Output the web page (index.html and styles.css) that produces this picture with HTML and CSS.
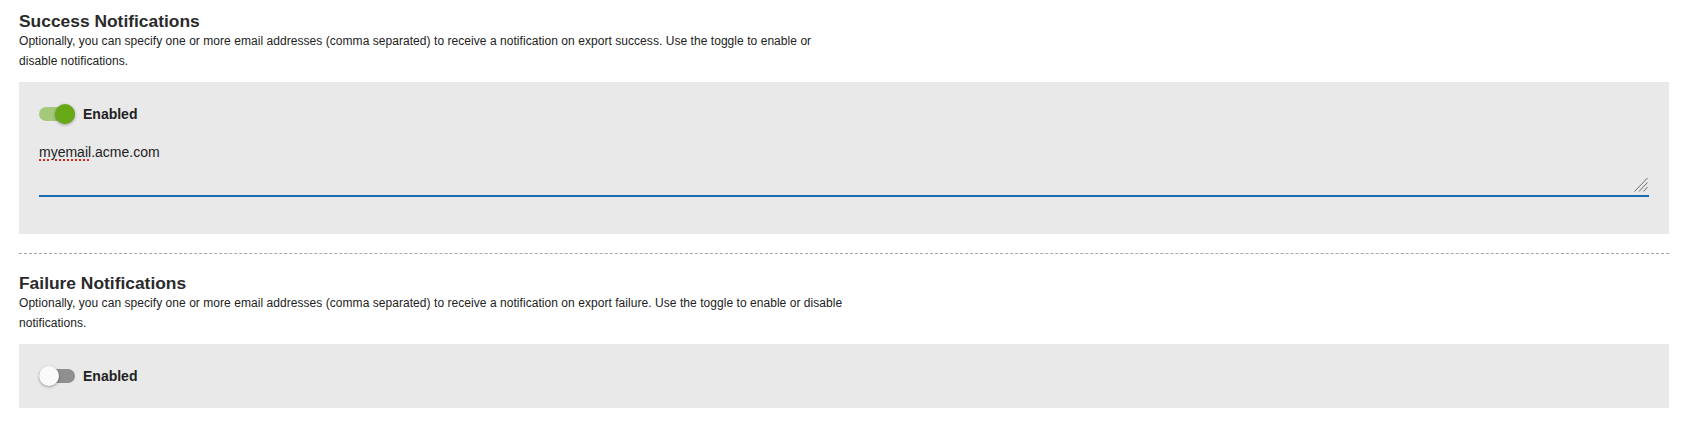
FILE: index.html
```html
<!DOCTYPE html>
<html lang="en">
<head>
<meta charset="utf-8">
<title>Notifications</title>
<link rel="stylesheet" href="styles.css">
</head>
<body>
<div class="page">
  <section class="section">
    <h2 class="section-title">Success Notifications</h2>
    <p class="section-desc">Optionally, you can specify one or more email addresses (comma separated) to receive a notification on export success. Use the toggle to enable or disable notifications.</p>
    <div class="panel">
      <div class="toggle-row">
        <span class="switch switch-on"><span class="track"></span><span class="thumb"></span></span>
        <span class="toggle-label">Enabled</span>
      </div>
      <div class="textarea" role="textbox" aria-multiline="true">
        <span class="misspell">myemail</span>.acme.com
        <svg class="resize" width="14" height="15" viewBox="0 0 14 15" aria-hidden="true">
          <line x1="0.5" y1="14.5" x2="13.5" y2="1" />
          <line x1="5" y1="14.5" x2="13.5" y2="5.5" />
          <line x1="9.5" y1="14.5" x2="13.5" y2="10" />
        </svg>
      </div>
    </div>
  </section>
  <hr class="separator">
  <section class="section">
    <h2 class="section-title">Failure Notifications</h2>
    <p class="section-desc">Optionally, you can specify one or more email addresses (comma separated) to receive a notification on export failure. Use the toggle to enable or disable notifications.</p>
    <div class="panel">
      <div class="toggle-row">
        <span class="switch switch-off"><span class="track"></span><span class="thumb"></span></span>
        <span class="toggle-label">Enabled</span>
      </div>
    </div>
  </section>
</div>
</body>
</html>
```
FILE: styles.css
```css
html, body {
  margin: 0;
  padding: 0;
  background: #ffffff;
}

body {
  font-family: "Liberation Sans", Arial, Helvetica, sans-serif;
  color: #222222;
}

.page {
  padding: 11px 19px 0;
}

.section-title {
  margin: 0;
  font-size: 17.4px;
  line-height: 21px;
  font-weight: 700;
  color: #2a2a2a;
}

.section-desc {
  margin: 0 0 11px;
  max-width: 828px;
  font-size: 12px;
  line-height: 19.5px;
  letter-spacing: 0.05px;
  color: #222222;
}

.panel {
  background: #e9e9e9;
  padding: 20px;
}

.toggle-row {
  display: flex;
  align-items: center;
  height: 24px;
}

.switch {
  position: relative;
  display: inline-block;
  width: 36px;
  height: 20px;
  flex: none;
}

.track {
  position: absolute;
  left: 0;
  right: 0;
  top: 3px;
  height: 14px;
  border-radius: 7px;
}

.thumb {
  position: absolute;
  top: 0;
  width: 20px;
  height: 20px;
  border-radius: 50%;
  box-shadow: 0 1px 3px rgba(0, 0, 0, 0.35);
}

.switch-on .track {
  background: #a5c97b;
}

.switch-on .thumb {
  left: 16px;
  background: #66a815;
}

.switch-off .track {
  background: #8f8f8f;
}

.switch-off .thumb {
  left: 0;
  background: #fafafa;
}

.toggle-label {
  margin-left: 8px;
  font-size: 14px;
  font-weight: 700;
  line-height: 24px;
  color: #222222;
}

.textarea {
  position: relative;
  margin: 12px 0 17px;
  padding: 4px 0 0;
  height: 53px;
  font-size: 14px;
  line-height: 20px;
  color: #222222;
  border-bottom: 2px solid #1b6db6;
}

.misspell {
  text-decoration: underline dotted #e5231d;
  text-decoration-thickness: 2px;
  text-underline-offset: 2px;
}

.resize {
  position: absolute;
  right: 1px;
  bottom: 3px;
  stroke: #6e6e6e;
  stroke-width: 1;
  fill: none;
}

.separator {
  margin: 19px 0;
  border: 0;
  border-top: 1px dashed #a8a8a8;
  height: 0;
}
```
